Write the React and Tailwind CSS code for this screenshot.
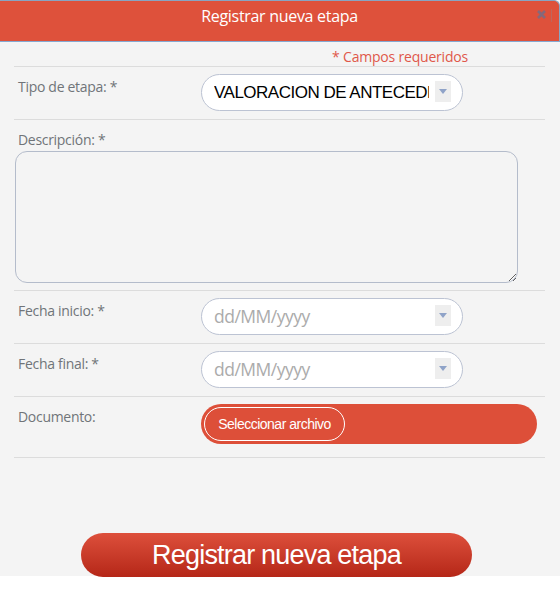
import React from "react";

function Arrow() {
  return (
    <div className="absolute right-[11px] top-[6px] w-[16px] h-[21px] bg-[#eeeeee] flex items-center justify-center">
      <svg width="8" height="5" viewBox="0 0 8 5">
        <path d="M0 0 L8 0 L4 5 Z" fill="#8fa3c8" />
      </svg>
    </div>
  );
}

function Label({ children }) {
  return (
    <div className="w-[187px] shrink-0 pl-[4px] pt-[4px] text-[14px] tracking-[-0.3px] leading-[18px] text-[#707479] font-['Open_Sans',sans-serif]">
      {children}
    </div>
  );
}

function DateInput() {
  return (
    <div className="relative w-[262px] h-[37px] rounded-full border border-[#bcc3d3] bg-white pl-[12px] flex items-center">
      <span className="text-[17.5px] tracking-[-0.5px] text-[#ababab] font-['Open_Sans',sans-serif]">dd/MM/yyyy</span>
      <Arrow />
    </div>
  );
}

export default function App() {
  return (
    <div className="w-[560px] h-[600px] bg-white overflow-hidden">
      <div className="h-[576px] bg-[#f4f4f4] flex flex-col">
        <div className="relative h-[42px] shrink-0 bg-[#de513b] border-t border-r border-[#88a4c2] rounded-tr-[6px] border-b border-b-[#86a9d2] text-center">
          <div className="pt-[5px] text-[16px] tracking-[-0.3px] leading-[20px] text-white font-['Open_Sans',sans-serif]">
            Registrar nueva etapa
          </div>
          <div className="absolute left-[537px] top-[9px]">
            <svg width="9" height="9" viewBox="0 0 9 9">
              <path d="M1 1 L8 8 M8 1 L1 8" stroke="#85687a" strokeWidth="2.6" />
            </svg>
          </div>
          <div className="absolute left-[551px] top-[8px] w-px h-[13px] bg-[#c0655a]" />
        </div>

        <div className="px-[14px] pr-[15px]">
          <div className="pt-[6px] h-[25px] border-b border-[#dcdcdc] text-right pr-[77px] text-[14px] tracking-[-0.2px] leading-[18px] text-[#e0584a] font-['Open_Sans',sans-serif]">
            * Campos requeridos
          </div>

          <div className="flex items-start pt-[7px] pb-[8px] border-b border-[#dcdcdc]">
            <Label>Tipo de etapa: *</Label>
            <div className="relative w-[262px] h-[37px] rounded-full border border-[#bcc3d3] bg-white pl-[12px] flex items-center">
              <span className="block w-[215px] overflow-hidden whitespace-nowrap text-[17px] tracking-[-0.5px] text-black font-['Liberation_Sans',Arial,sans-serif]">
                VALORACION DE ANTECEDENTES
              </span>
              <Arrow />
            </div>
          </div>

          <div className="pt-[11px] pb-[7px] border-b border-[#dcdcdc]">
            <div className="pl-[4px] text-[14px] tracking-[-0.3px] leading-[18px] text-[#707479] font-['Open_Sans',sans-serif]">
              Descripción: *
            </div>
            <textarea className="block mt-[2px] ml-[1px] w-[503px] h-[132px] rounded-[12px] border border-[#b4bccb] bg-[#f4f4f4] outline-none" />
          </div>

          <div className="flex items-start pt-[7px] pb-[8px] border-b border-[#dcdcdc]">
            <Label>Fecha inicio: *</Label>
            <DateInput />
          </div>

          <div className="flex items-start pt-[7px] pb-[8px] border-b border-[#dcdcdc]">
            <Label>Fecha final: *</Label>
            <DateInput />
          </div>

          <div className="flex items-start pt-[7px] pb-[13px] border-b border-[#dcdcdc]">
            <Label>Documento:</Label>
            <div className="w-[336px] h-[40px] rounded-full bg-[#dd4f39] pl-[3px] pt-[3px]">
              <div className="w-[141px] h-[34px] rounded-full border border-white flex items-center justify-center text-[14px] tracking-[-0.5px] text-white font-['Liberation_Sans',Arial,sans-serif]">
                Seleccionar archivo
              </div>
            </div>
          </div>
        </div>

        <div className="mt-[75px] ml-[81px] w-[391px] h-[44px] shrink-0 rounded-full bg-linear-to-b from-[#dd4f3b] to-[#b52617] flex items-center justify-center text-[27px] tracking-[-0.8px] text-white font-['Liberation_Sans',Arial,sans-serif]">
          Registrar nueva etapa
        </div>
      </div>
    </div>
  );
}
